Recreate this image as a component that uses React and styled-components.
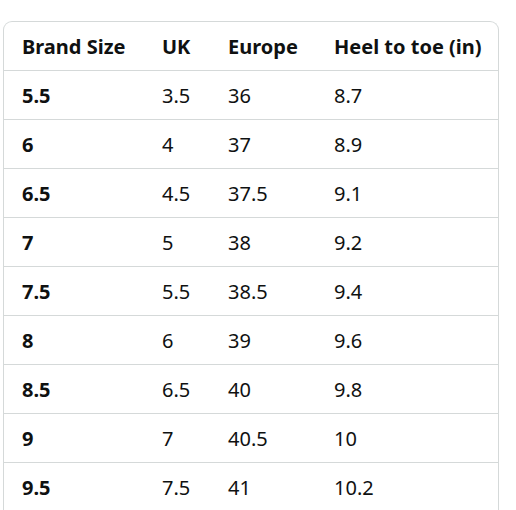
import React from 'react';
import styled, { createGlobalStyle } from 'styled-components';

const rows = [
	['5.5', '3.5', '36', '8.7'],
	['6', '4', '37', '8.9'],
	['6.5', '4.5', '37.5', '9.1'],
	['7', '5', '38', '9.2'],
	['7.5', '5.5', '38.5', '9.4'],
	['8', '6', '39', '9.6'],
	['8.5', '6.5', '40', '9.8'],
	['9', '7', '40.5', '10'],
	['9.5', '7.5', '41', '10.2'],
];

const headers = ['Brand Size', 'UK', 'Europe', 'Heel to toe (in)'];

function App() {
	return (
		<>
			<GlobalStyle />
			<Card>
				<Row>
					{headers.map((h) => (
						<Cell key={h} bold>
							{h}
						</Cell>
					))}
				</Row>
				{rows.map((r) => (
					<Row key={r[0]}>
						{r.map((v, i) => (
							<Cell key={i} bold={i === 0}>
								{v}
							</Cell>
						))}
					</Row>
				))}
			</Card>
		</>
	);
}

const GlobalStyle = createGlobalStyle`
	html, body {
		height: 100%;
	}
	body {
		margin: 0;
		padding: 21px 17px 0 3px;
		box-sizing: border-box;
		background: #fff;
		font-family: 'Noto Sans', 'Open Sans', sans-serif;
		color: #0f1111;
		overflow: hidden;
	}
`;

const Card = styled.div`
	border: 1px solid #d5d9d9;
	border-bottom: none;
	border-radius: 9px 9px 0 0;
	overflow: hidden;
	height: 100%;
`;

const Row = styled.div`
	display: grid;
	grid-template-columns: 140px 66px 106px 1fr;
	height: 48px;
	border-bottom: 1px solid #d5d9d9;
`;

const Cell = styled.div`
	display: flex;
	align-items: center;
	padding-left: 18px;
	font-size: 20px;
	font-weight: ${(p) => (p.bold ? 700 : 400)};
	white-space: nowrap;
`;

export default App;
